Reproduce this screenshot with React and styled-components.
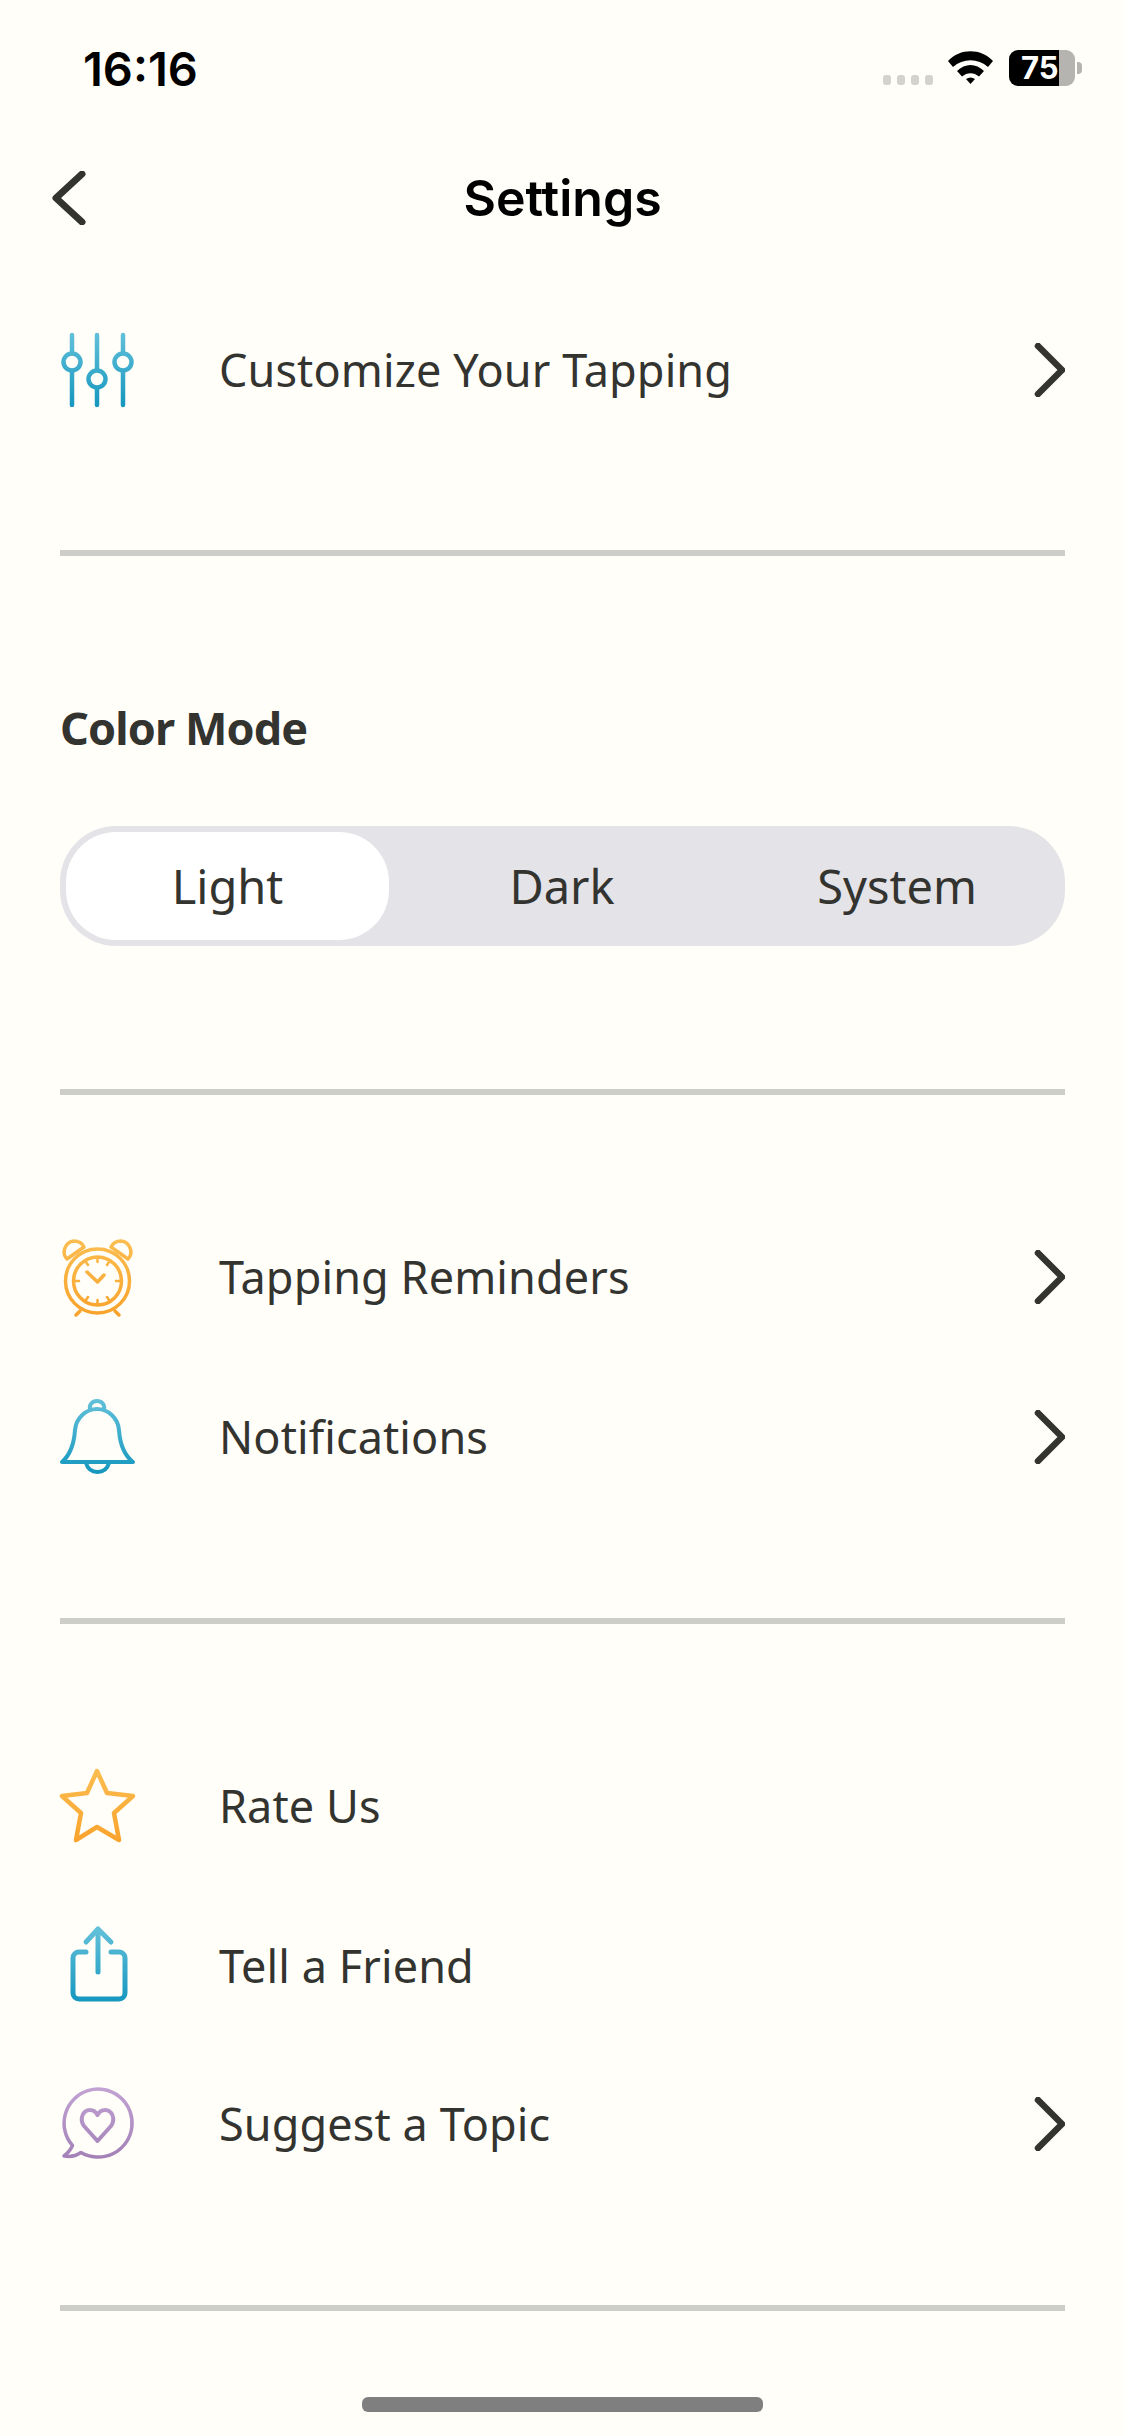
import React from 'react';
import styled, { createGlobalStyle } from 'styled-components';

const GlobalStyle = createGlobalStyle`
  html, body {
    margin: 0;
    padding: 0;
    background: #fffef9;
  }
  * {
    box-sizing: border-box;
  }
`;

const Screen = styled.div`
  width: 1125px;
  height: 2436px;
  background: #fffef9;
  color: #333330;
  font-family: "Noto Sans", "Open Sans", sans-serif;
  overflow: hidden;
`;

const StatusBar = styled.div`
  height: 136px;
  padding: 0 43px 0 83px;
  display: flex;
  justify-content: space-between;
  align-items: center;
`;

const Clock = styled.div`
  font-family: Inter, "Liberation Sans", sans-serif;
  font-size: 47px;
  font-weight: 600;
  color: #000;
`;

const StatusIcons = styled.div`
  display: flex;
  align-items: center;
`;

const SignalDots = styled.div`
  display: flex;
  gap: 6px;
  margin: 23px 15px 0 0;
`;

const SignalDot = styled.span`
  width: 8px;
  height: 10px;
  border-radius: 3px;
  background: #d3d2cd;
`;

const Battery = styled.div`
  width: 66px;
  height: 36px;
  margin-left: 15px;
  border-radius: 9px;
  background: linear-gradient(90deg, #000 50px, #b5b4b0 50px);
  color: #fff;
  font-family: Inter, "Liberation Sans", sans-serif;
  font-size: 31px;
  font-weight: 700;
  line-height: 36px;
  padding-left: 12px;
  white-space: nowrap;
`;

const BatteryNub = styled.span`
  width: 5px;
  height: 12px;
  margin-left: 2px;
  border-radius: 0 4px 4px 0;
  background: #b5b4b0;
`;

const NavBar = styled.div`
  height: 124px;
  padding: 0 86px 0 52px;
  display: flex;
  align-items: center;
`;

const BackButton = styled.div`
  width: 34px;
  display: flex;
`;

const Title = styled.h1`
  flex: 1;
  margin: 0;
  text-align: center;
  font-family: Inter, "Liberation Sans", sans-serif;
  font-size: 50px;
  font-weight: 600;
  color: #000;
`;

const Section = styled.section`
  margin: 0 60px;
  padding-top: ${(p) => p.$top}px;
  padding-bottom: ${(p) => p.$bottom}px;
  border-bottom: 6px solid #cdcdc9;
`;

const Row = styled.div`
  height: 100px;
  display: flex;
  align-items: center;
  margin-top: ${(p) => p.$gap || 0}px;
`;

const IconSlot = styled.div`
  width: 74px;
  height: 74px;
  margin-right: 85px;
  flex-shrink: 0;

  svg {
    display: block;
    overflow: visible;
  }
`;

const RowLabel = styled.span`
  flex: 1;
  font-size: 45px;
  letter-spacing: 0.1px;
  padding-bottom: 2px;
`;

const SectionTitle = styled.h2`
  margin: 0;
  font-size: 45px;
  line-height: 60px;
  font-weight: 700;
  letter-spacing: -0.9px;
`;

const ModeSwitch = styled.div`
  height: 120px;
  margin-top: 68px;
  padding: 6px;
  border-radius: 56px;
  background: #e3e3e8;
  display: grid;
  grid-template-columns: 323px 346px 1fr;
`;

const ModeOption = styled.div`
  display: flex;
  align-items: center;
  justify-content: center;
  border-radius: 50px;
  font-size: 47px;
  background: ${(p) => (p.$active ? '#fff' : 'transparent')};
`;

const HomeBar = styled.div`
  width: 401px;
  height: 15px;
  margin: 86px auto 0;
  border-radius: 6px;
  background: #807f7f;
`;

const ChevronRight = () => (
  <svg width="34" height="54" viewBox="0 0 34 54" fill="none">
    <path d="M7 3 L31 27 L7 51" stroke="#333330" strokeWidth="6.5" strokeLinecap="round" strokeLinejoin="round" />
  </svg>
);

const ChevronLeft = () => (
  <svg width="34" height="54" viewBox="0 0 34 54" fill="none">
    <path d="M30 3 L4 27 L30 51" stroke="#333330" strokeWidth="7" strokeLinecap="round" strokeLinejoin="round" />
  </svg>
);

const WifiIcon = () => (
  <svg width="46" height="34" viewBox="0 0 46 34" fill="#000">
    <path d="M0 10 C 12 -3 33 -3 45 10 L40 16 C 30 7 15 7 5 16 Z" />
    <path d="M9 20 C 17 12 28 12 36 20 L31 25.5 C 26 21 19 21 14 25.5 Z" />
    <path d="M18 28 C 21 26 24 26 27 28 L22.5 33 Z" />
  </svg>
);

const TwoToneIcon = ({ id, top, bottom, width = 4, children }) => (
  <svg width="74" height="74" viewBox="0 0 74 74" fill="none">
    <defs>
      <linearGradient id={id} gradientUnits="userSpaceOnUse" x1="0" y1="0" x2="0" y2="74">
        <stop offset="0" stopColor={top} />
        <stop offset="1" stopColor={bottom} />
      </linearGradient>
    </defs>
    <g stroke={`url(#${id})`} strokeWidth={width} strokeLinecap="round" strokeLinejoin="round">
      {children}
    </g>
  </svg>
);

const BLUE_TOP = '#62c0d9';
const BLUE_BOTTOM = '#1597bf';
const ORANGE_TOP = '#fbbd50';
const ORANGE_BOTTOM = '#f9a32c';

const SlidersIcon = () => (
  <TwoToneIcon id="sliders" top={BLUE_TOP} bottom={BLUE_BOTTOM} width={4.5}>
    <path d="M12 2 V20 M12 38 V72 M37 2 V37 M37 55 V72 M63 2 V20 M63 38 V72" />
    <circle cx="12" cy="29" r="8.5" />
    <circle cx="37" cy="46" r="8.5" />
    <circle cx="63" cy="29" r="8.5" />
  </TwoToneIcon>
);

const AlarmIcon = () => (
  <TwoToneIcon id="alarm" top={ORANGE_TOP} bottom={ORANGE_BOTTOM} width={3.5}>
    <circle cx="37.5" cy="41" r="32" />
    <circle cx="37.5" cy="41" r="24" />
    <path d="M7 19 C 1 13 5 2 14 1 C 18 1 22 3 24 7 Z" />
    <path d="M68 19 C 74 13 70 2 61 1 C 57 1 53 3 51 7 Z" />
    <path d="M20 71 L16 75 M55 71 L59 75" />
    <path d="M37.5 42 L27 32 M37.5 42 L44 35" strokeWidth="3.5" />
    <path d="M37.5 18 V22 M37.5 60 V64 M15 41 H19 M56 41 H60 M26 22 L28 25 M49 22 L47 25 M26 60 L28 57 M49 60 L47 57" strokeWidth="2.5" />
  </TwoToneIcon>
);

const BellIcon = () => (
  <TwoToneIcon id="bell" top={BLUE_TOP} bottom={BLUE_BOTTOM} width={4}>
    <path d="M2 62 C 10 55 14 45 15 30 C 16 18 26 9 37 9 C 48 9 58 18 59 30 C 60 45 64 55 73 62 Z" />
    <path d="M30 9 C 29 5 32 1 37 1 C 42 1 45 5 44 9" />
    <path d="M26 63 C 28 70 32 72 37.5 72 C 43 72 47 70 49 63" />
  </TwoToneIcon>
);

const StarIcon = () => (
  <TwoToneIcon id="star" top={ORANGE_TOP} bottom={ORANGE_BOTTOM} width={4.5}>
    <path d="M37 2 L47 24 L73 27 L54 44 L59 71 L37 58 L16 71 L21 44 L2 27 L27 24 Z" />
  </TwoToneIcon>
);

const ShareIcon = () => (
  <TwoToneIcon id="share" top={BLUE_TOP} bottom={BLUE_BOTTOM} width={5}>
    <path d="M26 23 H19 a6 6 0 0 0 -6 6 V64 a6 6 0 0 0 6 6 H59 a6 6 0 0 0 6 -6 V29 a6 6 0 0 0 -6 -6 H51" />
    <path d="M38 43 V0 M26 13 L38 0 L51 13" />
  </TwoToneIcon>
);

const TopicIcon = () => (
  <TwoToneIcon id="topic" top="#c2a3d4" bottom="#a280b6" width={3.5}>
    <path d="M12.5 58.5 A34 34 0 1 1 21 65.5 C 16 69 10 70 4 69 C 8 66 11 62 12.5 58.5 Z" />
    <path d="M37.5 54 L24 39 C 19 32 23 23 30 23 C 34 23 36 25 37.5 28 C 39 25 41 23 45 23 C 52 23 56 32 51 39 Z" strokeWidth="4" />
  </TwoToneIcon>
);

const MenuRow = ({ icon, label, arrow, gap }) => (
  <Row $gap={gap}>
    <IconSlot>{icon}</IconSlot>
    <RowLabel>{label}</RowLabel>
    {arrow && <ChevronRight />}
  </Row>
);

export default function App() {
  return (
    <Screen>
      <GlobalStyle />
      <StatusBar>
        <Clock>16:16</Clock>
        <StatusIcons>
          <SignalDots>
            <SignalDot />
            <SignalDot />
            <SignalDot />
            <SignalDot />
          </SignalDots>
          <WifiIcon />
          <Battery>75</Battery>
          <BatteryNub />
        </StatusIcons>
      </StatusBar>

      <NavBar>
        <BackButton>
          <ChevronLeft />
        </BackButton>
        <Title>Settings</Title>
      </NavBar>

      <Section $top={60} $bottom={130}>
        <MenuRow icon={<SlidersIcon />} label="Customize Your Tapping" arrow />
      </Section>

      <Section $top={142} $bottom={143}>
        <SectionTitle>Color Mode</SectionTitle>
        <ModeSwitch>
          <ModeOption $active>Light</ModeOption>
          <ModeOption>Dark</ModeOption>
          <ModeOption>System</ModeOption>
        </ModeSwitch>
      </Section>

      <Section $top={132} $bottom={131}>
        <MenuRow icon={<AlarmIcon />} label="Tapping Reminders" arrow />
        <MenuRow icon={<BellIcon />} label="Notifications" arrow gap={60} />
      </Section>

      <Section $top={132} $bottom={131}>
        <MenuRow icon={<StarIcon />} label="Rate Us" />
        <MenuRow icon={<ShareIcon />} label="Tell a Friend" gap={60} />
        <MenuRow icon={<TopicIcon />} label="Suggest a Topic" arrow gap={58} />
      </Section>

      <HomeBar />
    </Screen>
  );
}
